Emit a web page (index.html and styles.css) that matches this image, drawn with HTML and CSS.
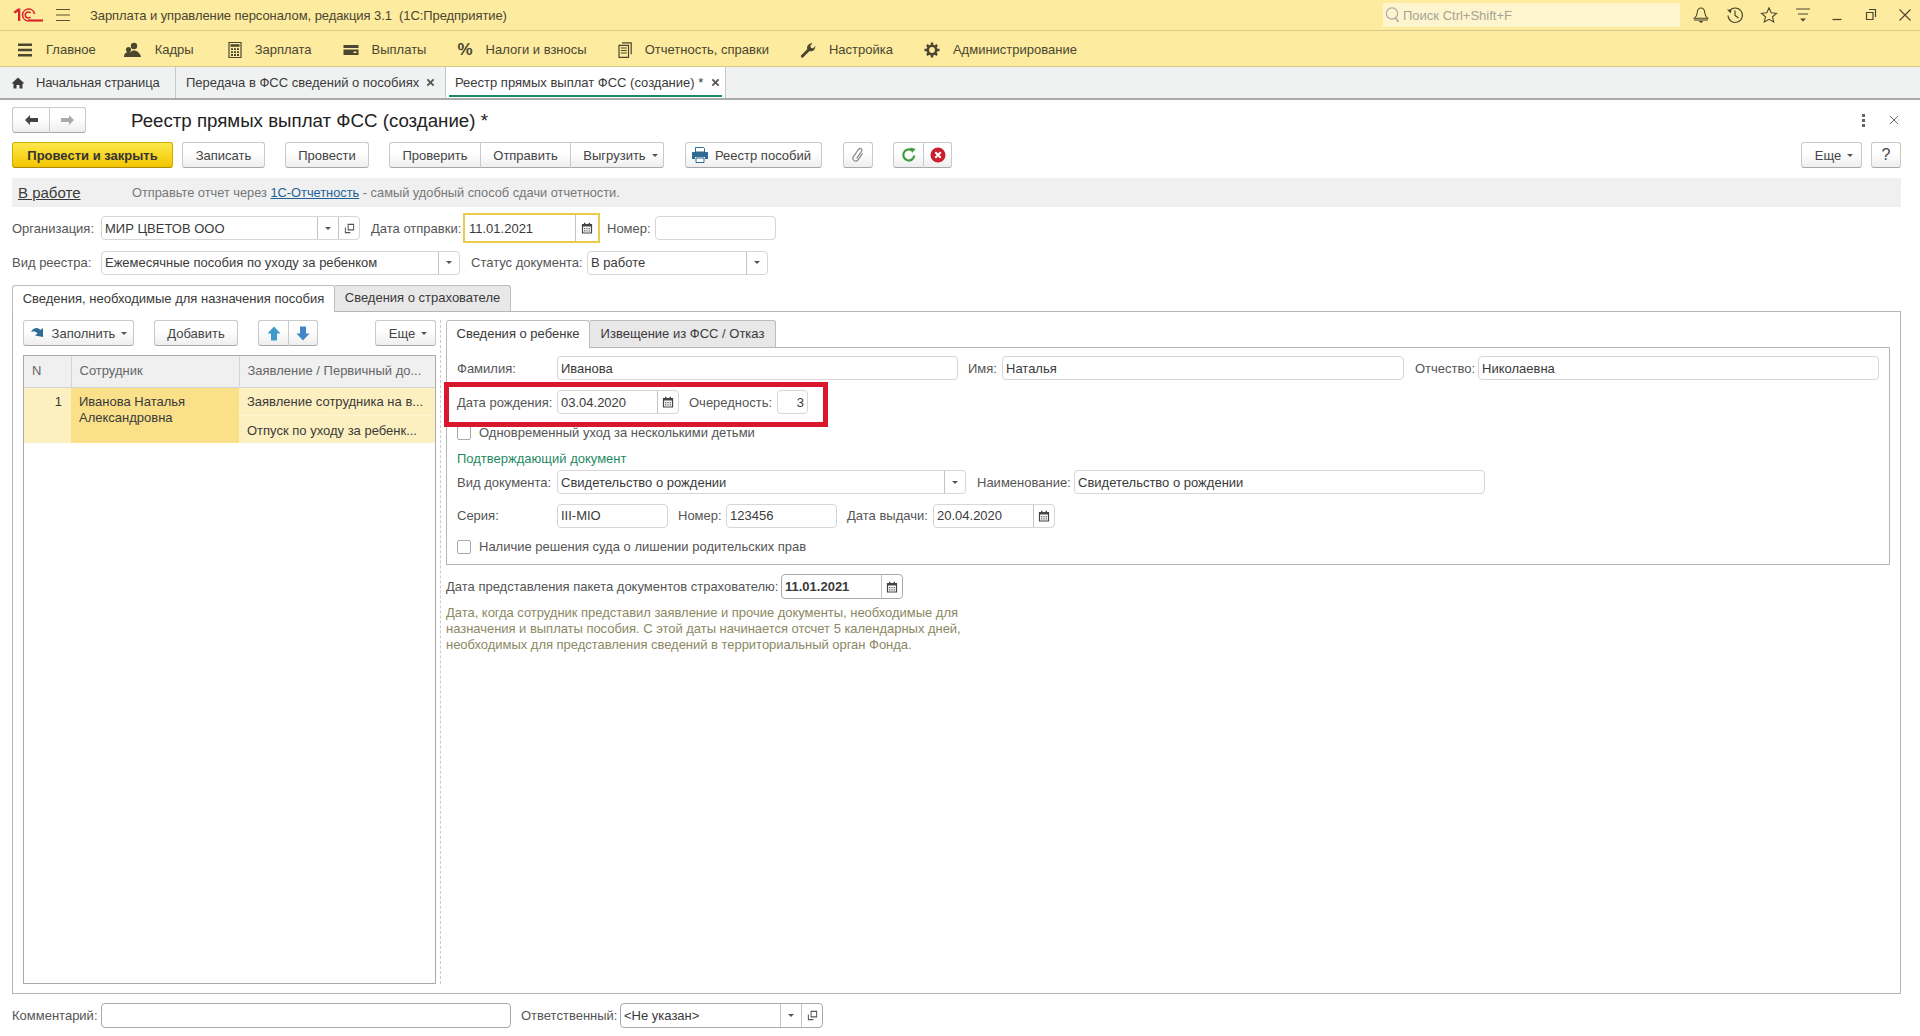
FILE: index.html
```html
<!DOCTYPE html>
<html lang="ru">
<head>
    <meta charset="UTF-8">
    <meta name="viewport" content="width=device-width, initial-scale=1.0">
    <title>Реестр прямых выплат ФСС (создание)</title>
    <link rel="stylesheet" href="styles.css">
</head>
<body>

    <!-- Иконки -->
    <svg class="defs" width="0" height="0">
        <symbol id="i-cal" viewBox="0 0 12 12">
            <path d="M1.5 2.5h9v8.5h-9z" fill="none" stroke="#444" stroke-width="1.2"/>
            <path d="M1.5 2h9v2.6h-9zM3 .8h1.4v2H3zM7.6 .8H9v2H7.6z" fill="#444"/>
            <path d="M3 6h1.4v1.2H3zM5.3 6h1.4v1.2H5.3zM7.6 6H9v1.2H7.6zM3 8.2h1.4v1.2H3zM5.3 8.2h1.4v1.2H5.3zM7.6 8.2H9v1.2H7.6z" fill="#666"/>
        </symbol>
        <symbol id="i-open" viewBox="0 0 12 12">
            <path d="M4.5 1.5h6v6h-6zM1.5 5v5.5h5.5" fill="none" stroke="#555" stroke-width="1.1"/>
        </symbol>
        <symbol id="i-x" viewBox="0 0 10 10">
            <path d="M1.5 1.5l7 7M8.5 1.5l-7 7" stroke="#555" stroke-width="2" fill="none"/>
        </symbol>
    </svg>

    <div class="titlebar">
        <svg class="logo" width="30" height="16" viewBox="0 0 30 16">
            <path d="M.5 4.800L5 1.500h2.300V14H5V4.800L2 6.600z" fill="#d8262c"/>
            <path d="M15 14A6 6 0 1 1 21.500 7" fill="none" stroke="#d8262c" stroke-width="1.600"/>
            <path d="M17.500 6A3 3 0 1 0 17.500 10" fill="none" stroke="#d8262c" stroke-width="1.600"/>
            <path d="M15 12.400h15v2.200H15z" fill="#d8262c"/>
        </svg>
        <svg class="burger" width="16" height="14" viewBox="0 0 16 14">
            <path d="M1 1.500h14M1 7h14M1 12.500h14" stroke="#5a5230" stroke-width="1.200"/>
        </svg>
        <span class="app-title">Зарплата и управление персоналом, редакция 3.1&nbsp; (1С:Предприятие)</span>
        <div class="search">
            <svg width="16" height="18" viewBox="0 0 16 18">
                <circle cx="7" cy="7.500" r="5.600" fill="none" stroke="#aaa" stroke-width="1.200"/>
                <path d="M10.500 12l3 4" stroke="#aaa" stroke-width="1.600"/>
            </svg>
            <span>Поиск Ctrl+Shift+F</span>
        </div>
        <div class="sys-icons">
            <svg width="18" height="18" viewBox="0 0 18 18"><path d="M9 2c-2.600 0-3.600 2.200-3.800 5-.2 2.400-1.200 3.800-3 5.300h13.600c-1.800-1.500-2.800-2.900-3-5.300C12.600 4.200 11.600 2 9 2z" fill="none" stroke="#4a4630" stroke-width="1.100"/><path d="M6.500 15h5l-2.500 2z" fill="#4a4630"/><path d="M2 14h14" stroke="#4a4630" stroke-width="1.100"/></svg>
            <svg width="18" height="18" viewBox="0 0 18 18"><path d="M3.400 5A7.200 7.200 0 1 1 2 9.500" fill="none" stroke="#4a4630" stroke-width="1.100"/><path d="M1 3.500l4.500.2-1 3.800z" fill="#4a4630"/><path d="M9 4.500v5l3.500 2.500" fill="none" stroke="#4a4630" stroke-width="1.200"/></svg>
            <svg width="18" height="18" viewBox="0 0 18 18"><path d="M9 1.800l2.200 4.900 5.300.6-4 3.500 1.200 5.200L9 13.300 4.300 16l1.200-5.200-4-3.500 5.300-.6z" fill="none" stroke="#4a4630" stroke-width="1.100"/></svg>
            <svg width="18" height="18" viewBox="0 0 18 18"><path d="M2 3h14M4 8h10" stroke="#4a4630" stroke-width="1.100"/><path d="M6 12.500h6l-3 3z" fill="#4a4630"/></svg>
            <svg width="18" height="18" viewBox="0 0 18 18"><path d="M4.500 13.500h9" stroke="#4a4630" stroke-width="1.300"/></svg>
            <svg width="18" height="18" viewBox="0 0 18 18"><path d="M7 3.500h6.500V11M4.500 6.500h6.500v7H4.500z" fill="none" stroke="#4a4630" stroke-width="1.200"/></svg>
            <svg width="18" height="18" viewBox="0 0 18 18"><path d="M3.500 3.500l11 11M14.500 3.500l-11 11" stroke="#4a4630" stroke-width="1.100"/></svg>
        </div>
    </div>

    <div class="menubar">
        <a class="menu-item">
            <svg width="16" height="16" viewBox="0 0 16 16"><path d="M1 1.500h14v2.400H1zM1 6.800h14v2.400H1zM1 12.100h14v2.400H1z" fill="#4a4630"/></svg>
            Главное
        </a>
        <a class="menu-item menu-staff">
            <svg width="18" height="16" viewBox="0 0 18 16"><circle cx="10" cy="4" r="3.200" fill="#4a4630"/><path d="M5 15c0-4 2-6.500 5-6.500s6 2.500 7 6.500z" fill="#4a4630"/><circle cx="4.500" cy="7.500" r="2.600" fill="#4a4630"/><path d="M0 15c0-3.500 2-5 4.500-5 1.500 0 2 .5 2.500 1-1 1-1.500 2.500-1.500 4z" fill="#4a4630"/></svg>
            Кадры
        </a>
        <a class="menu-item menu-salary">
            <svg width="14" height="16" viewBox="0 0 14 16"><path d="M1 .5h12v15H1z" fill="none" stroke="#4a4630" stroke-width="1.200"/><path d="M2.500 2.200h9v2.600h-9zM3 6.300h2v1.800H3zM6 6.300h2v1.800H6zM9 6.300h2v1.800H9zM3 9.200h2V11H3zM6 9.200h2V11H6zM9 9.200h2V11H9zM3 12.100h2v1.800H3zM6 12.100h2v1.800H6zM9 12.100h2v1.800H9z" fill="#4a4630"/></svg>
            Зарплата
        </a>
        <a class="menu-item">
            <svg width="16" height="14" viewBox="0 0 16 14"><path d="M.5 2h15v3H.5zM.5 6.500h15V12H.5z" fill="#4a4630"/><path d="M10.500 8.500h3v1.500h-3z" fill="#fdeb9f"/></svg>
            Выплаты
        </a>
        <a class="menu-item percent">
            <span class="pct">%</span>
            Налоги и взносы
        </a>
        <a class="menu-item">
            <svg width="14" height="16" viewBox="0 0 14 16"><path d="M4 .8h9.200v11.500M1 3.300h9.500v12H1z" fill="none" stroke="#4a4630" stroke-width="1.200"/><path d="M2.800 6h6M2.800 8.500h6M2.800 11h6" stroke="#4a4630" stroke-width="1.200"/></svg>
            Отчетность, справки
        </a>
        <a class="menu-item">
            <svg width="16" height="16" viewBox="0 0 16 16"><path d="M1 13.500l6.200-6.300C6.500 4.500 8.500 1 12.500 1.300L10.300 3.700l.6 2.100 2.100.6 2.300-2.400c.3 4-3.300 6-6 5.200L3 15.500c-1 .8-2.800-.8-2-2z" fill="#4a4630"/></svg>
            Настройка
        </a>
        <a class="menu-item">
            <svg width="16" height="16" viewBox="0 0 16 16"><circle cx="8" cy="8" r="4.200" fill="none" stroke="#4a4630" stroke-width="2.600"/><path d="M6.800 .5h2.400v2.500H6.800zM6.800 13h2.400v2.500H6.800zM.5 6.800H3v2.400H.5zM13 6.800h2.500v2.400H13zM2 3.700l1.700-1.700 1.800 1.800-1.700 1.700zM10.500 12.200l1.700-1.700 1.800 1.800-1.700 1.700zM2 12.300l1.800-1.800 1.700 1.700L3.700 14zM10.500 3.800L12.300 2 14 3.700l-1.800 1.800z" fill="#4a4630"/></svg>
            Администрирование
        </a>
    </div>

    <div class="tabbar">
        <div class="tab tab-home">
            <svg width="14" height="12" viewBox="0 0 14 12"><path d="M7 .5L.5 6.500h2V11.500h3V8h3v3.500h3V6.500h2z" fill="#3c3c3c"/></svg>
            Начальная страница
        </div>
        <div class="tab tab-second">
            Передача в ФСС сведений о пособиях
            <svg class="tab-x" width="9" height="9"><use href="#i-x"/></svg>
        </div>
        <div class="tab tab-active">
            Реестр прямых выплат ФСС (создание) *
            <svg class="tab-x" width="9" height="9"><use href="#i-x"/></svg>
        </div>
    </div>

    <div class="form">
        <div class="form-head">
            <div class="btn-group nav-btns">
                <button class="btn nav-btn"><svg width="15" height="12" viewBox="0 0 15 12"><path d="M1 6l5-5v3h8v4H6v3z" fill="#444"/></svg></button>
                <button class="btn nav-btn"><svg width="15" height="12" viewBox="0 0 15 12"><path d="M14 6L9 1v3H1v4h8v3z" fill="#aaa"/></svg></button>
            </div>
            <h1 class="form-title">Реестр прямых выплат ФСС (создание) *</h1>
            <div class="head-tools">
                <svg width="3" height="13" viewBox="0 0 3 13"><path d="M0 0h3v3H0zM0 5h3v3H0zM0 10h3v3H0z" fill="#666"/></svg>
                <svg width="10" height="10" viewBox="0 0 10 10"><path d="M1 1l8 8M9 1l-8 8" stroke="#666" stroke-width="1"/></svg>
            </div>
        </div>

        <div class="toolbar">
            <button class="btn btn-primary">Провести и закрыть</button>
            <button class="btn w-83">Записать</button>
            <button class="btn w-84 sep">Провести</button>
            <div class="btn-group sep">
                <button class="btn w-91">Проверить</button>
                <button class="btn w-90">Отправить</button>
                <button class="btn w-94 btn-export">Выгрузить <i class="caret"></i></button>
            </div>
            <button class="btn w-137 sep-wide btn-print">
                <svg width="18" height="16" viewBox="0 0 18 16"><path d="M4.500 .5h8l1 1V5h-9z" fill="#fff" stroke="#2f6b92"/><path d="M1 5h16v7h-3v-2H4v2H1z" fill="#2f6b92"/><path d="M5 11h8v4.500H5z" fill="#fff" stroke="#2f6b92"/></svg>
                Реестр пособий
            </button>
            <button class="btn w-30 sep-wide">
                <svg width="14" height="16" viewBox="0 0 14 16"><g transform="rotate(35 7 8)"><path d="M9.800 4v8a2.800 2.800 0 0 1-5.600 0V3a1.800 1.800 0 0 1 3.600 0v8.500" fill="none" stroke="#8a8a8a" stroke-width="1.200"/></g></svg>
            </button>
            <div class="btn-group sep">
                <button class="btn w-30">
                    <svg width="16" height="16" viewBox="0 0 16 16"><path d="M13.300 8.500A5.500 5.500 0 1 1 11 3.500" fill="none" stroke="#3e9a3e" stroke-width="2.200"/><path d="M9.500 .5l5 1.500-3.500 4z" fill="#3e9a3e"/></svg>
                </button>
                <button class="btn w-29">
                    <svg width="16" height="16" viewBox="0 0 16 16"><circle cx="8" cy="8" r="7.500" fill="#c8202f"/><path d="M5.300 5.300l5.400 5.400M10.700 5.300l-5.400 5.400" stroke="#fff" stroke-width="2"/></svg>
                </button>
            </div>
            <div class="toolbar-right">
                <button class="btn w-61 btn-more">Еще <i class="caret"></i></button>
                <button class="btn w-30 btn-help">?</button>
            </div>
        </div>

        <div class="status-band">
            <a class="status-link">В работе</a>
            <span class="status-hint">Отправьте отчет через <a class="link">1С-Отчетность</a> - самый удобный способ сдачи отчетности.</span>
        </div>

        <div class="row row-first">
            <label class="lbl w-89">Организация:</label>
            <div class="field w-259"><span class="val">МИР ЦВЕТОВ ООО</span><span class="fbtn"><i class="caret"></i></span><span class="fbtn"><svg width="11" height="11"><use href="#i-open"/></svg></span></div>
            <label class="lbl ml-11 w-92">Дата отправки:</label>
            <div class="field field-focus w-137"><span class="val">11.01.2021</span><span class="fbtn"><svg width="12" height="12"><use href="#i-cal"/></svg></span></div>
            <label class="lbl ml-7 w-48">Номер:</label>
            <div class="field w-121"></div>
        </div>

        <div class="row row-second">
            <label class="lbl w-89">Вид реестра:</label>
            <div class="field w-359"><span class="val">Ежемесячные пособия по уходу за ребенком</span><span class="fbtn"><i class="caret"></i></span></div>
            <label class="lbl ml-11 w-116">Статус документа:</label>
            <div class="field w-181"><span class="val">В работе</span><span class="fbtn"><i class="caret"></i></span></div>
        </div>

        <div class="tabs">
            <div class="page-tab page-tab-active w-323">Сведения, необходимые для назначения пособия</div>
            <div class="page-tab w-176">Сведения о страхователе</div>
        </div>

        <div class="panel">
            <div class="left-col">
                <div class="toolbar">
                    <button class="btn w-111">
                        <svg width="16" height="14" viewBox="0 0 16 14"><path d="M1 6C3 1.500 8 .5 10.500 4L13 2v9L5 9.500 7.500 7.500C6 5.500 3.500 5 1 6z" fill="#2f6b92"/></svg>
                        Заполнить <i class="caret"></i>
                    </button>
                    <button class="btn w-84 sep">Добавить</button>
                    <div class="btn-group sep">
                        <button class="btn w-30"><svg width="14" height="15" viewBox="0 0 14 15"><path d="M7 .5l6.500 7H10v7H4v-7H.5z" fill="#3d9ac9"/></svg></button>
                        <button class="btn w-30"><svg width="14" height="15" viewBox="0 0 14 15"><path d="M7 14.500l6.500-7H10v-7H4v7H.5z" fill="#3f88c5"/></svg></button>
                    </div>
                    <div class="toolbar-right">
                        <button class="btn w-61 btn-more">Еще <i class="caret"></i></button>
                    </div>
                </div>
                <div class="grid-wrap">
                    <table class="grid">
                        <colgroup><col class="col-n"><col class="col-emp"><col></colgroup>
                        <thead>
                            <tr><th>N</th><th>Сотрудник</th><th>Заявление / Первичный до...</th></tr>
                        </thead>
                        <tbody>
                            <tr>
                                <td rowspan="2" class="cell-num">1</td>
                                <td rowspan="2" class="cell-emp">Иванова Наталья Александровна</td>
                                <td class="cell-doc">Заявление сотрудника на в...</td>
                            </tr>
                            <tr><td class="cell-doc cell-doc-low">Отпуск по уходу за ребенк...</td></tr>
                        </tbody>
                    </table>
                </div>
            </div>

            <div class="splitter"></div>

            <div class="right-col">
                <div class="tabs tabs-inner">
                    <div class="page-tab page-tab-active w-144">Сведения о ребенке</div>
                    <div class="page-tab w-186">Извещение из ФСС / Отказ</div>
                </div>
                <div class="inner-panel">
                    <div class="row row-name">
                        <label class="lbl w-100">Фамилия:</label>
                        <div class="field w-401"><span class="val">Иванова</span></div>
                        <label class="lbl ml-10 w-34">Имя:</label>
                        <div class="field w-402"><span class="val">Наталья</span></div>
                        <label class="lbl ml-11 w-63">Отчество:</label>
                        <div class="field w-401"><span class="val">Николаевна</span></div>
                    </div>
                    <div class="row row-birth">
                        <label class="lbl w-100">Дата рождения:</label>
                        <div class="field w-122"><span class="val">03.04.2020</span><span class="fbtn"><svg width="12" height="12"><use href="#i-cal"/></svg></span></div>
                        <label class="lbl ml-10 w-88">Очередность:</label>
                        <div class="field w-31"><span class="val val-right">3</span></div>
                        <div class="red-frame"></div>
                    </div>
                    <label class="check check-first"><i class="box"></i>Одновременный уход за несколькими детьми</label>
                    <div class="group-title">Подтверждающий документ</div>
                    <div class="row row-kind">
                        <label class="lbl w-100">Вид документа:</label>
                        <div class="field w-409"><span class="val">Свидетельство о рождении</span><span class="fbtn"><i class="caret"></i></span></div>
                        <label class="lbl ml-11 w-97">Наименование:</label>
                        <div class="field w-411"><span class="val">Свидетельство о рождении</span></div>
                    </div>
                    <div class="row row-serial">
                        <label class="lbl w-100">Серия:</label>
                        <div class="field w-111"><span class="val">III-MIO</span></div>
                        <label class="lbl ml-10 w-48">Номер:</label>
                        <div class="field w-111"><span class="val">123456</span></div>
                        <label class="lbl ml-10 w-86">Дата выдачи:</label>
                        <div class="field w-122"><span class="val">20.04.2020</span><span class="fbtn"><svg width="12" height="12"><use href="#i-cal"/></svg></span></div>
                    </div>
                    <label class="check check-last"><i class="box"></i>Наличие решения суда о лишении родительских прав</label>
                </div>
                <div class="row row-package">
                    <label class="lbl w-335">Дата представления пакета документов страхователю:</label>
                    <div class="field w-122 field-dark"><span class="val val-bold">11.01.2021</span><span class="fbtn"><svg width="12" height="12"><use href="#i-cal"/></svg></span></div>
                </div>
                <p class="note">Дата, когда сотрудник представил заявление и прочие документы, необходимые для<br>назначения и выплаты пособия. С этой даты начинается отсчет 5 календарных дней,<br>необходимых для представления сведений в территориальный орган Фонда.</p>
            </div>
        </div>

        <div class="row row-bottom">
            <label class="lbl w-89">Комментарий:</label>
            <div class="field w-410 field-dark"></div>
            <label class="lbl ml-10 w-99">Ответственный:</label>
            <div class="field w-203 field-dark"><span class="val">&lt;Не указан&gt;</span><span class="fbtn"><i class="caret"></i></span><span class="fbtn"><svg width="11" height="11"><use href="#i-open"/></svg></span></div>
        </div>
    </div>

</body>
</html>
```

FILE: styles.css
```css
* {
    margin: 0;
    padding: 0;
    box-sizing: border-box;
}

body {
    width: 1920px;
    height: 1036px;
    overflow: hidden;
    display: flex;
    flex-direction: column;
    background: #fff;
    color: #3a3a3a;
    font-family: "Liberation Sans", Arial, sans-serif;
    font-size: 13px;
}

.defs { position: absolute; }

/* Верхняя панель */
.titlebar {
    height: 31px;
    flex: none;
    display: flex;
    align-items: center;
    padding-left: 13px;
    background: #fdeb9f;
    border-bottom: 1px solid #d8c987;
    color: #4a4630;
}

.burger { margin-left: 12px; }

.app-title {
    margin-left: 19px;
    letter-spacing: -0.07px;
}

.search {
    margin-left: auto;
    width: 297px;
    height: 24px;
    display: flex;
    align-items: center;
    gap: 2px;
    padding-left: 2px;
    background: #fef5cf;
    color: #a5a294;
}

.sys-icons {
    display: flex;
    align-items: center;
    gap: 16px;
    margin-left: 12px;
    padding-right: 6px;
}

.menubar {
    height: 36px;
    flex: none;
    display: flex;
    align-items: center;
    padding: 2px 0 0 17px;
    gap: 31px;
    background: #fdeb9f;
    border-bottom: 1px solid #d8c987;
    color: #4a4630;
}

.menu-item {
    display: flex;
    align-items: center;
    gap: 13px;
}

.menu-staff { margin-left: -3px; }
.menu-salary { margin-left: 3px; }

.pct {
    font-size: 17px;
    font-weight: bold;
}

/* Вкладки окон */
.tabbar {
    height: 33px;
    flex: none;
    display: flex;
    background: #f0f2f2;
    border-bottom: 2px solid #aaa;
}

.tab {
    display: flex;
    align-items: center;
    border-right: 1px solid #c8c8c8;
    position: relative;
}

.tab-home {
    width: 176px;
    padding-left: 11px;
    gap: 11px;
    letter-spacing: -0.12px;
}

.tab-second {
    width: 270px;
    padding-left: 10px;
    gap: 7px;
}

.tab-active {
    width: 280px;
    padding-left: 9px;
    gap: 8px;
    background: #fff;
}

.tab-active::after {
    content: "";
    position: absolute;
    left: 3px;
    right: 3px;
    bottom: 1px;
    height: 2px;
    background: #1f8a62;
}

/* Форма */
.form {
    flex: 1;
    min-height: 0;
    display: flex;
    flex-direction: column;
    padding: 8px 19px 8px 12px;
}

.form-head {
    height: 24px;
    flex: none;
    display: flex;
    align-items: center;
}

.nav-btn { width: 37px; height: 24px; }

.form-title {
    margin: 1px 0 0 45px;
    font-size: 18.7px;
    font-weight: normal;
    color: #222;
}

.head-tools {
    margin-left: auto;
    display: flex;
    align-items: center;
    gap: 24px;
    padding-right: 2px;
}

.toolbar {
    height: 26px;
    flex: none;
    display: flex;
    gap: 9px;
    margin-top: 10px;
}

.toolbar-right {
    margin-left: auto;
    display: flex;
    gap: 9px;
}

.btn {
    height: 26px;
    display: flex;
    align-items: center;
    justify-content: center;
    gap: 6px;
    flex: none;
    border: 1px solid #c9c9c9;
    border-bottom-color: #a8a8a8;
    border-radius: 3px;
    background: linear-gradient(#fff 40%, #eee);
    font: inherit;
    color: #444;
}

.btn-primary {
    width: 161px;
    background: linear-gradient(#fde94a, #f3c500);
    border-color: #d2ad00;
    border-bottom-color: #a98c00;
    font-weight: bold;
    color: #333;
}

.btn-export { padding-left: 7px; }
.btn-print { padding-right: 5px; }
.btn-more { padding-left: 5px; }
.btn-help { font-size: 16px; }

.btn-group { display: flex; flex: none; }
.btn-group .btn { border-radius: 0; border-right: none; }
.btn-group .btn:first-child { border-radius: 3px 0 0 3px; }
.btn-group .btn:last-child { border-radius: 0 3px 3px 0; border-right: 1px solid #c9c9c9; }

.caret {
    display: inline-block;
    flex: none;
    width: 0;
    height: 0;
    border: 3px solid transparent;
    border-top: 3px solid #555;
    border-bottom: none;
}

/* Статус */
.status-band {
    height: 29px;
    flex: none;
    display: flex;
    align-items: center;
    margin-top: 10px;
    padding-left: 6px;
    background: #f0f0f0;
}

.status-link {
    width: 114px;
    font-size: 15px;
    text-decoration: underline;
}

.status-hint { font-size: 12.8px; color: #777; }
.link { color: #1f5f96; text-decoration: underline; }

/* Строки полей */
.row {
    display: flex;
    align-items: center;
    flex: none;
}

.row-first { height: 30px; margin-top: 6px; }
.row-second { height: 25px; margin-top: 7px; }
.row-bottom { height: 25px; margin-top: 9px; }

.lbl {
    flex: none;
    white-space: nowrap;
    color: #555;
}

.field {
    flex: none;
    height: 24px;
    display: flex;
    align-items: center;
    border: 1px solid #d6d6d6;
    border-radius: 4px;
    background: #fff;
}

.field-focus {
    height: 30px;
    border: 2px solid #eccb4a;
    border-radius: 0;
}

.field-focus .val { padding-left: 4px; }
.field-focus .fbtn { width: 23px; }

.field-dark { height: 25px; border-color: #a9a9a9; }

.val {
    flex: 1;
    min-width: 0;
    padding-left: 3px;
    white-space: nowrap;
    overflow: hidden;
}

.val-right { text-align: right; padding-right: 3px; }
.val-bold { font-weight: bold; }

.fbtn {
    width: 21px;
    height: 100%;
    flex: none;
    display: flex;
    align-items: center;
    justify-content: center;
    border-left: 1px solid #c4c4c4;
}

/* Вкладки страниц */
.tabs {
    height: 26px;
    flex: none;
    display: flex;
    margin-top: 10px;
}

.tabs-inner { height: 27px; margin-top: 0; }

.page-tab {
    flex: none;
    display: flex;
    align-items: center;
    justify-content: center;
    padding-bottom: 2px;
    background: #e8e8e8;
    border: 1px solid #bdbdbd;
    border-left: none;
    border-bottom: none;
    border-radius: 0 3px 0 0;
}

.page-tab-active {
    background: #fff;
    border-left: 1px solid #bdbdbd;
    border-radius: 3px 3px 0 0;
    margin-bottom: -1px;
    position: relative;
    z-index: 1;
}

.panel {
    flex: 1;
    min-height: 0;
    display: flex;
    padding: 8px 10px 9px 10px;
    border: 1px solid #b5b5b5;
}

.left-col {
    width: 413px;
    flex: none;
    display: flex;
    flex-direction: column;
}

.left-col .toolbar { margin-top: 0; }

.grid-wrap {
    flex: 1;
    margin-top: 9px;
    border: 1px solid #a9a9a9;
}

.grid {
    width: 100%;
    table-layout: fixed;
    border-collapse: collapse;
}

.col-n { width: 47px; }
.col-emp { width: 168px; }

.grid th {
    height: 31px;
    padding: 0 0 2px 8px;
    background: #f0f0f0;
    border-right: 1px solid #d4d4d4;
    border-bottom: 1px solid #d4d4d4;
    font-weight: normal;
    text-align: left;
    color: #666;
    white-space: nowrap;
    overflow: hidden;
}

.grid th:last-child { border-right: none; }

.grid td {
    height: 28px;
    padding: 0 0 0 8px;
    white-space: nowrap;
    overflow: hidden;
}

.grid .cell-num {
    background: #fdf0c0;
    text-align: right;
    vertical-align: top;
    padding: 6px 9px 0 0;
}

.grid .cell-emp {
    background: #fbe08a;
    vertical-align: top;
    white-space: normal;
    padding-top: 6px;
    line-height: 16px;
}

.cell-doc {
    background: #fdf0c0;
    border-top: 1px solid #fff4d0;
}

.grid .cell-doc-low { padding-top: 2px; }

.splitter {
    width: 0;
    flex: none;
    margin-left: 4px;
    border-left: 1px dashed #ccc;
}

.right-col {
    flex: 1;
    min-width: 0;
    margin-left: 5px;
    display: flex;
    flex-direction: column;
}

.inner-panel {
    height: 218px;
    flex: none;
    padding: 0 10px;
    border: 1px solid #b5b5b5;
}

.row-name { height: 24px; margin-top: 8px; }
.row-birth { height: 24px; margin-top: 10px; position: relative; }
.row-kind { height: 24px; margin-top: 3px; }
.row-serial { height: 25px; margin-top: 9px; }
.row-package { height: 25px; margin-top: 9px; }

.red-frame {
    position: absolute;
    left: -13px;
    top: -8px;
    width: 384px;
    height: 45px;
    border: 5px solid #d9182d;
}

.check {
    display: flex;
    align-items: center;
    gap: 8px;
    height: 15px;
    color: #555;
}

.check-first { margin-top: 11px; }
.check-last { margin-top: 11px; }

.box {
    width: 14px;
    height: 14px;
    flex: none;
    border: 1px solid #a9a9a9;
    border-radius: 2px;
    background: #fff;
}

.group-title {
    height: 16px;
    margin-top: 11px;
    color: #1f8a5f;
}

.note {
    margin-top: 6px;
    line-height: 16px;
    letter-spacing: -0.03px;
    color: #8c8864;
}

/* Ширины */
.w-29 { width: 29px; }
.w-30 { width: 30px; }
.w-31 { width: 31px; }
.w-34 { width: 34px; }
.w-48 { width: 48px; }
.w-61 { width: 61px; }
.w-63 { width: 63px; }
.w-83 { width: 83px; }
.w-84 { width: 84px; }
.w-86 { width: 86px; }
.w-88 { width: 88px; }
.w-89 { width: 89px; }
.w-90 { width: 90px; }
.w-91 { width: 91px; }
.w-92 { width: 92px; }
.w-94 { width: 94px; }
.w-97 { width: 97px; }
.w-99 { width: 99px; }
.w-100 { width: 100px; }
.w-111 { width: 111px; }
.w-116 { width: 116px; }
.w-121 { width: 121px; }
.w-122 { width: 122px; }
.w-137 { width: 137px; }
.w-144 { width: 144px; }
.w-176 { width: 176px; }
.w-181 { width: 181px; }
.w-186 { width: 186px; }
.w-203 { width: 203px; }
.w-259 { width: 259px; }
.w-323 { width: 323px; }
.w-335 { width: 335px; }
.w-359 { width: 359px; }
.w-401 { width: 401px; }
.w-402 { width: 402px; }
.w-409 { width: 409px; }
.w-410 { width: 410px; }
.w-411 { width: 411px; }

.ml-7 { margin-left: 7px; }
.ml-10 { margin-left: 10px; }
.ml-11 { margin-left: 11px; }

/* Отступы между кнопками сверх общего gap */
.sep { margin-left: 11px; }
.sep-wide { margin-left: 12px; }
```
